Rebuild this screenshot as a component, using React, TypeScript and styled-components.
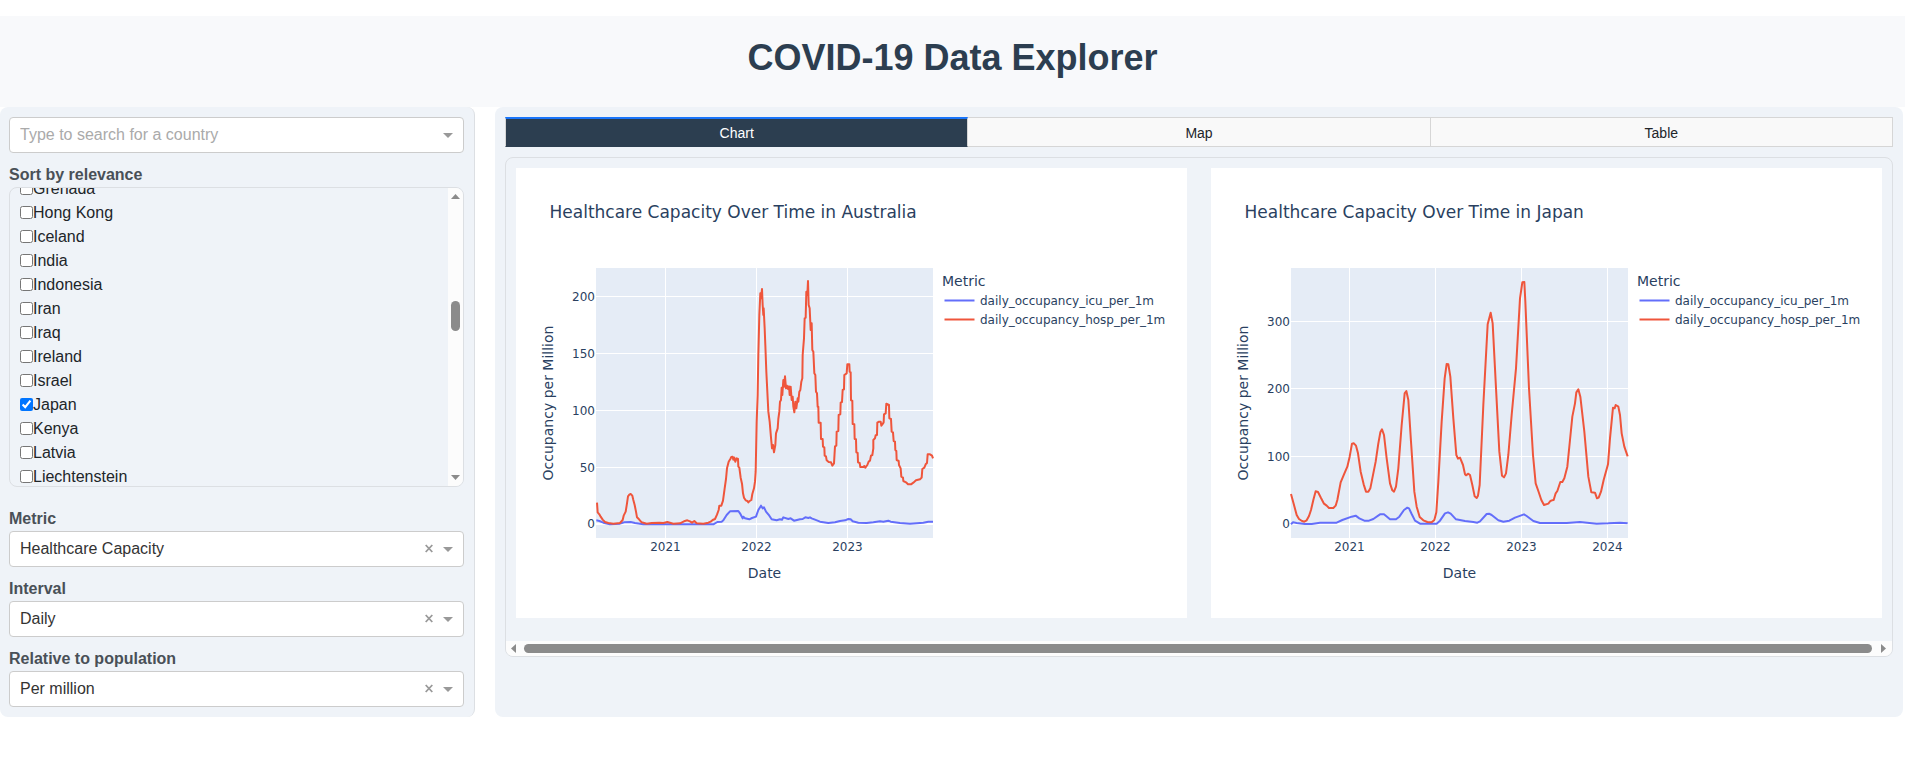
import React, { useLayoutEffect, useRef, useState } from "react";
import styled, { createGlobalStyle } from "styled-components";

const GlobalStyle = createGlobalStyle`
  * { box-sizing: border-box; }
  body {
    margin: 0;
    background: #fff;
    color: #212529;
    font: 16px/24px "Liberation Sans", Arial, sans-serif;
  }
`;

const Page = styled.div`
  padding-top: 16px;
`;

const Header = styled.header`
  padding: 22px 20px 29px;
  background: #f8f9fb;
  text-align: center;
`;

const Title = styled.h1`
  margin: 0;
  color: #2c3e50;
  font-size: 36px;
  line-height: 40px;
  font-weight: 700;
`;

const Columns = styled.div`
  display: flex;
  gap: 20px;
  padding-right: 2px;
`;

const Sidebar = styled.aside`
  flex: 0 0 25%;
  max-width: 475px;
  padding: 10px 10px 10px 9px;
  border-right: 1px solid #dcdfe3;
  border-radius: 8px;
  background: #eff3f8;
`;

const Main = styled.main`
  flex: 1;
  min-width: 0;
  padding: 10px;
  border-radius: 8px;
  background: #eff3f8;
`;

const Field = styled.div<{ $gap?: number }>`
  margin-top: ${(p) => p.$gap ?? 10}px;
`;

const Label = styled.label`
  display: block;
  color: #495057;
  font-weight: 700;
`;

const Control = styled.div`
  display: flex;
  align-items: center;
  height: 36px;
  padding-right: 10px;
  border: 1px solid #ccc;
  border-radius: 4px;
  background: #fff;
`;

const SearchInput = styled.input`
  flex: 1;
  min-width: 0;
  height: 100%;
  padding: 0 10px;
  border: 0;
  outline: 0;
  background: transparent;
  color: #333;
  font: inherit;
  &::placeholder { color: #aaa; opacity: 1; }
`;

const Select = styled.select`
  flex: 1;
  min-width: 0;
  height: 100%;
  padding: 0 10px;
  border: 0;
  outline: 0;
  appearance: none;
  background: transparent;
  color: #333;
  font: inherit;
`;

const IconButton = styled.button`
  display: flex;
  align-items: center;
  justify-content: center;
  width: 10px;
  height: 24px;
  margin-left: 9px;
  padding: 0;
  border: 0;
  background: none;
  color: #999;
`;

const ListFrame = styled.div`
  display: flex;
  height: 300px;
  overflow: hidden;
  border: 1px solid #dcdfe3;
  border-radius: 8px;
`;

const CountryList = styled.div`
  flex: 1;
  padding: 0 10px;
  overflow-y: scroll;
  scrollbar-width: none;
`;

const CountryRow = styled.label`
  display: flex;
  align-items: center;
  height: 24px;
`;

const Checkbox = styled.input`
  width: 13px;
  height: 13px;
  margin: 0 0 2px;
  accent-color: #0075ff;
`;

const ScrollTrack = styled.div<{ $horizontal?: boolean }>`
  display: flex;
  flex: 0 0 15px;
  flex-direction: ${(p) => (p.$horizontal ? "row" : "column")};
  align-items: center;
  justify-content: space-between;
  padding: ${(p) => (p.$horizontal ? "0 6px 0 5px" : "6px 0")};
  background: #fcfcfc;
  color: #8b8b8b;
`;

const ListThumb = styled.div`
  width: 9px;
  height: 30px;
  margin-bottom: 42px;
  border-radius: 5px;
  background: #8b8b8b;
`;

const ChartThumb = styled.div`
  flex: 1;
  height: 9px;
  margin: 0 9px 0 8px;
  border-radius: 5px;
  background: #8b8b8b;
`;

const Tabs = styled.div`
  display: flex;
`;

const Tab = styled.button<{ $active: boolean }>`
  flex: 1;
  height: 30px;
  padding: 2px 0 0;
  border: 1px solid #d6d6d6;
  border-left-width: 0;
  background: #f9f9f9;
  color: #212529;
  font: 14px/20px "Liberation Sans", Arial, sans-serif;
  &:first-child { border-left-width: 1px; }
  ${(p) =>
    p.$active &&
    `
    padding-top: 1px;
    border-top: 2px solid #1975fa;
    border-bottom-color: #2c3e50;
    background: #2c3e50;
    color: #fff;
  `}
`;

const Viewer = styled.section`
  display: flex;
  flex-direction: column;
  margin-top: 10px;
  overflow: hidden;
  border: 1px solid #dcdfe3;
  border-radius: 8px;
`;

const Charts = styled.div`
  display: flex;
  gap: 24px;
  padding: 10px 10px 23px;
`;

const ChartCard = styled.figure`
  flex: 1;
  min-width: 0;
  margin: 0;
  background: #fff;
`;

const ChartSvg = styled.svg`
  display: block;
  width: 100%;
  height: 450px;
  font-family: Verdana, "DejaVu Sans", sans-serif;
  font-size: 12px;
  fill: #2a3f5f;
`;

const Arrow = ({ dir }: { dir: "up" | "down" | "left" | "right" }) => {
  const flat = dir === "up" || dir === "down";
  const d = {
    up: "M0 5 L4.5 0 L9 5Z",
    down: "M0 0 L9 0 L4.5 5Z",
    left: "M5 0 L0 4.5 L5 9Z",
    right: "M0 0 L5 4.5 L0 9Z",
  }[dir];
  return (
    <svg width={flat ? 9 : 5} height={flat ? 5 : 9} fill="currentColor" aria-hidden>
      <path d={d} />
    </svg>
  );
};

const OpenButton = ({ label }: { label: string }) => (
  <IconButton type="button" aria-label={label}>
    <svg width="10" height="5" aria-hidden>
      <path d="M0 0H10L5 5Z" fill="#999" />
    </svg>
  </IconButton>
);

const Dropdown = ({ id, label, options, gap }: { id: string; label: string; options: string[]; gap?: number }) => (
  <Field $gap={gap}>
    <Label htmlFor={id}>{label}</Label>
    <Control>
      <Select id={id}>
        {options.map((o) => (
          <option key={o}>{o}</option>
        ))}
      </Select>
      <IconButton type="button" aria-label={`Clear ${label}`}>
        <svg width="8" height="10" aria-hidden>
          <path d="M0.7 1L7.3 8M7.3 1L0.7 8" stroke="#999" strokeWidth="1.8" />
        </svg>
      </IconButton>
      <OpenButton label={`Open ${label}`} />
    </Control>
  </Field>
);

const countries = [
  "Grenada", "Hong Kong", "Iceland", "India", "Indonesia", "Iran", "Iraq",
  "Ireland", "Israel", "Japan", "Kenya", "Latvia", "Liechtenstein",
];

const CountryPicker = () => {
  const list = useRef<HTMLDivElement>(null);
  const [checked, setChecked] = useState<string[]>(["Japan"]);
  useLayoutEffect(() => {
    if (list.current) list.current.scrollTop = 11;
  }, []);
  const toggle = (c: string) =>
    setChecked((v) => (v.includes(c) ? v.filter((x) => x !== c) : [...v, c]));
  return (
    <ListFrame>
      <CountryList id="countries" ref={list} role="group" aria-labelledby="countries-label">
        {countries.map((c) => (
          <CountryRow key={c}>
            <Checkbox type="checkbox" checked={checked.includes(c)} onChange={() => toggle(c)} />
            {c}
          </CountryRow>
        ))}
      </CountryList>
      <ScrollTrack>
        <Arrow dir="up" />
        <ListThumb />
        <Arrow dir="down" />
      </ScrollTrack>
    </ListFrame>
  );
};

type Tick = [number, string];

interface ChartProps {
  country: string;
  xTicks: Tick[];
  yTicks: Tick[];
  originX: number;
  icu: string;
  hosp: string;
}

// Series points are stored at three times the chart's resolution.
const OccupancyChart = ({ country, xTicks, yTicks, originX, icu, hosp }: ChartProps) => (
  <ChartCard>
    <ChartSvg viewBox="0 0 671 450" role="img" aria-label={`Healthcare capacity in ${country}`}>
      <text x="33.5" y="50" fontSize="17">{`Healthcare Capacity Over Time in ${country}`}</text>
      <rect x="80" y="100" width="337" height="270" fill="#e5ecf6" />
      {xTicks.map(([x, t]) => (
        <g key={t}>
          <path d={`M${x} 100V370`} stroke="#fff" />
          <text x={x} y="383" textAnchor="middle">{t}</text>
        </g>
      ))}
      {yTicks.map(([y, t]) => (
        <g key={t}>
          <path d={`M80 ${y}H417`} stroke="#fff" strokeWidth={t === "0" ? 2 : 1} />
          <text x="79" y={y + 4} textAnchor="end">{t}</text>
        </g>
      ))}
      <g transform={`translate(${originX} 87) scale(0.33333)`} fill="none" strokeWidth="6" strokeLinejoin="round">
        <polyline points={icu} stroke="#636efa" />
        <polyline points={hosp} stroke="#ef553b" />
      </g>
      <text x="248.5" y="410" fontSize="14" textAnchor="middle">Date</text>
      <text transform="translate(37 235) rotate(-90)" fontSize="14" textAnchor="middle">Occupancy per Million</text>
      <text x="426" y="118" fontSize="14">Metric</text>
      <path d="M428.5 132.5h30" stroke="#636efa" strokeWidth="2" />
      <text x="464" y="137">daily_occupancy_icu_per_1m</text>
      <path d="M428.5 151.5h30" stroke="#ef553b" strokeWidth="2" />
      <text x="464" y="156">daily_occupancy_hosp_per_1m</text>
    </ChartSvg>
  </ChartCard>
);

const australia: ChartProps = {
  country: "Australia",
  originX: 64,
  xTicks: [[149.5, "2021"], [240.5, "2022"], [331.5, "2023"]],
  yTicks: [[356, "0"], [299.5, "50"], [242.5, "100"], [185.5, "150"], [128.5, "200"]],
  icu: "49,796 58,798 70,803 90,808 120,806 133,802 152,801 165,804 190,808 400,808 412,801 425,800 430,796 440,780 450,769 475,768 480,775 488,790 490,785 495,790 508,793 516,789 528,785 535,765 543,752 548,760 552,757 558,770 568,782 575,793 590,796 600,793 606,794 610,787 625,792 632,790 642,797 660,793 668,792 676,787 685,789 690,787 695,790 705,794 720,800 745,804 765,802 780,798 795,796 805,792 812,793 818,799 835,803 860,804 880,802 900,799 910,800 925,797 932,800 960,804 990,806 1030,803 1045,800 1059,800",
  hosp: "51,743 53,772 58,778 62,785 68,794 75,801 85,804 100,806 120,804 128,795 131,782 137,770 141,745 144,724 148,719 152,717 157,722 160,735 164,750 168,770 171,787 177,793 185,802 200,806 215,804 238,803 250,804 262,801 280,806 300,805 312,799 322,796 330,799 336,803 343,798 350,805 370,806 385,803 392,800 398,795 405,792 411,779 416,765 418,752 424,752 429,737 434,700 438,672 441,640 446,620 451,612 454,606 458,605 460,614 463,608 466,620 470,610 474,612 475,635 478,638 482,668 486,686 489,715 492,728 497,736 502,738 505,742 509,738 514,735 517,717 522,700 525,680 527,650 530,500 533,420 535,300 538,180 541,115 543,130 546,102 548,150 550,180 551,160 554,220 556,270 559,350 562,410 565,470 569,500 573,548 576,580 579,570 582,592 586,570 588,535 593,520 595,492 598,470 600,440 603,435 605,398 607,420 610,375 612,395 615,364 618,400 621,392 624,402 627,394 629,420 632,395 635,435 638,425 640,455 643,472 646,440 649,460 653,430 655,440 658,410 661,405 664,380 667,370 668,300 672,250 674,190 677,188 679,110 682,120 684,78 686,150 689,160 692,225 695,205 697,285 700,290 703,355 706,360 708,410 711,415 713,455 715,455 716,503 722,503 723,552 728,552 729,575 733,577 734,602 738,604 740,616 746,621 753,622 757,632 762,625 765,574 769,572 770,530 775,528 776,480 781,478 782,443 786,441 788,405 792,403 793,360 800,355 802,328 808,328 809,350 812,352 813,436 817,437 818,507 823,508 824,552 828,553 829,592 833,594 834,622 839,624 841,636 850,636 853,633 856,638 862,630 866,620 870,617 873,602 877,600 880,580 880,555 885,550 887,541 891,540 892,503 897,500 902,500 904,512 907,508 911,502 912,478 917,475 919,446 927,450 928,490 933,492 935,530 939,532 941,558 945,560 946,585 949,588 950,615 956,618 957,630 962,640 964,665 969,668 970,678 978,682 984,688 993,688 1000,683 1008,676 1020,673 1025,668 1027,642 1033,638 1037,628 1041,624 1043,598 1050,598 1056,602 1059,610",
};

const japan: ChartProps = {
  country: "Japan",
  originX: 59,
  xTicks: [[138.5, "2021"], [224.5, "2022"], [310.5, "2023"], [396.5, "2024"]],
  yTicks: [[356, "0"], [288.5, "100"], [220.5, "200"], [153.5, "300"]],
  icu: "63,808 69,802 80,804 105,807 125,807 150,803 200,803 217,795 245,785 257,782 268,790 283,797 297,797 310,792 330,778 342,778 360,793 378,793 388,785 402,765 412,758 417,760 425,777 435,797 450,806 500,806 510,797 525,775 534,772 542,776 558,793 585,798 610,801 622,803 630,799 650,777 657,776 665,780 685,796 700,800 718,797 735,788 762,778 770,783 790,798 810,804 890,804 930,801 980,806 1015,805 1050,803 1073,805",
  hosp: "63,717 72,750 80,780 87,792 96,798 103,800 110,796 117,783 123,765 130,735 137,709 144,711 153,729 162,746 170,752 177,759 190,759 197,752 202,735 212,682 222,658 232,635 239,605 246,566 251,565 258,572 264,595 272,650 281,688 288,710 295,710 301,700 308,665 317,620 325,565 331,532 336,523 342,540 350,610 360,685 367,706 372,710 378,695 385,640 395,510 404,415 409,408 415,435 423,560 433,710 440,755 449,786 460,796 472,801 485,802 493,795 499,772 505,680 515,500 524,370 530,327 535,328 541,365 550,490 559,600 564,611 570,608 579,630 585,658 588,661 595,656 600,660 607,690 614,724 620,729 624,722 629,690 640,450 653,208 662,173 668,205 677,380 688,590 696,662 702,667 708,655 715,600 725,480 738,340 750,130 757,82 763,81 766,140 777,400 789,600 797,685 806,711 814,735 822,750 835,746 841,738 846,736 851,735 857,715 862,708 871,681 877,681 883,670 892,635 900,555 907,485 915,445 919,412 925,403 931,425 943,530 955,665 964,712 975,713 981,730 986,728 993,710 1001,675 1014,628 1020,550 1029,458 1034,460 1037,450 1045,455 1050,480 1055,535 1063,575 1073,604",
};

export default function App() {
  const [tab, setTab] = useState("Chart");
  return (
    <Page>
      <GlobalStyle />
      <Header>
        <Title>COVID-19 Data Explorer</Title>
      </Header>
      <Columns>
        <Sidebar>
          <Control>
            <SearchInput type="text" aria-label="Country" placeholder="Type to search for a country" />
            <OpenButton label="Open countries" />
          </Control>
          <Field>
            <Label as="div" id="countries-label">Sort by relevance</Label>
            <CountryPicker />
          </Field>
          <Dropdown id="metric" label="Metric" options={["Healthcare Capacity"]} gap={20} />
          <Dropdown id="interval" label="Interval" options={["Daily"]} />
          <Dropdown id="relative" label="Relative to population" options={["Per million"]} />
        </Sidebar>
        <Main>
          <Tabs role="tablist">
            {["Chart", "Map", "Table"].map((t) => (
              <Tab key={t} type="button" role="tab" aria-selected={t === tab} $active={t === tab} onClick={() => setTab(t)}>
                {t}
              </Tab>
            ))}
          </Tabs>
          <Viewer>
            <Charts>
              <OccupancyChart {...australia} />
              <OccupancyChart {...japan} />
            </Charts>
            <ScrollTrack $horizontal>
              <Arrow dir="left" />
              <ChartThumb />
              <Arrow dir="right" />
            </ScrollTrack>
          </Viewer>
        </Main>
      </Columns>
    </Page>
  );
}
